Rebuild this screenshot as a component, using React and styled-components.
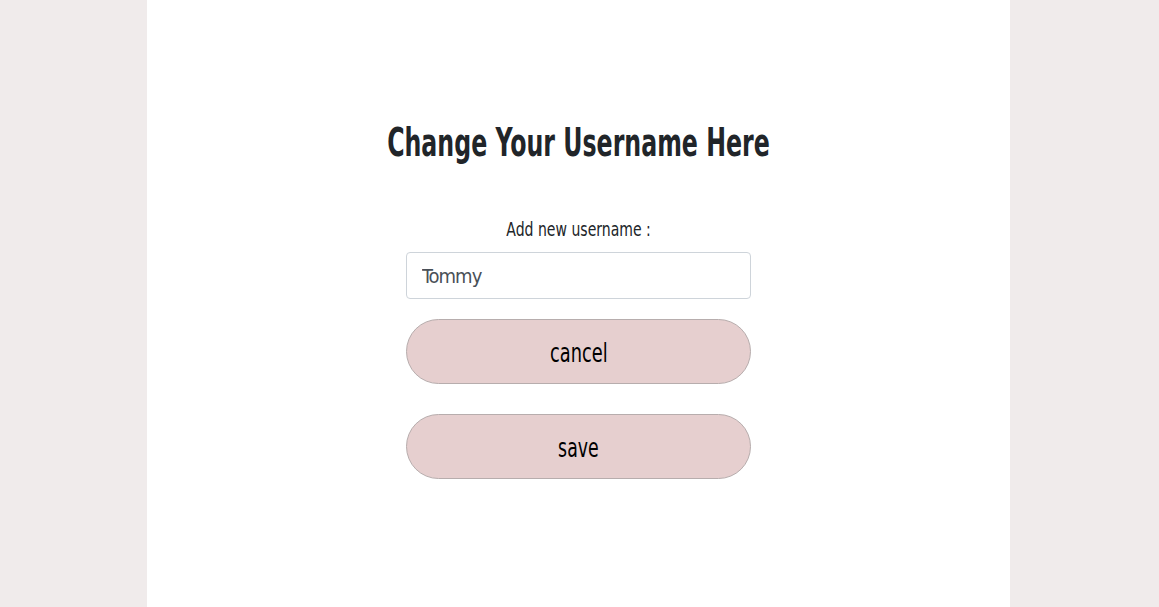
import React, { useState } from 'react';
import styled, { createGlobalStyle } from 'styled-components';

const GlobalStyle = createGlobalStyle`
  html, body {
    margin: 0;
    padding: 0;
    background-color: #f0ebeb;
    font-family: "DejaVu Sans Condensed", "Liberation Sans", sans-serif;
  }
`;

const Page = styled.div`
  min-height: 607px;
  display: flex;
  justify-content: center;
`;

const Panel = styled.main`
  width: 863px;
  margin-left: -2px;
  min-height: 607px;
  background-color: #ffffff;
  display: flex;
  flex-direction: column;
  align-items: center;
  padding-top: 120px;
  box-sizing: border-box;
`;

/* the reference face is a tall condensed one; squeeze the installed face to its width */
const Narrow = styled.span`
  display: inline-block;
  white-space: nowrap;
  transform: scaleX(${(p) => p.$sx});
`;

const Title = styled.h1`
  margin: 0 0 50px;
  font-size: 39px;
  font-weight: 700;
  color: #212529;
  line-height: 1.2;
`;

const Form = styled.form`
  width: 345px;
  display: flex;
  flex-direction: column;
  align-items: center;
`;

const Label = styled.label`
  font-size: 20px;
  line-height: 1.2;
  color: #212529;
  margin-bottom: 11px;
`;

const Input = styled.input`
  width: 100%;
  height: 47px;
  box-sizing: border-box;
  border: 1px solid #ced4da;
  border-radius: 4px;
  padding: 2px 15px 0;
  font-family: inherit;
  font-size: 20px;
  letter-spacing: -1px;
  color: #495057;
  margin-bottom: 20px;
  outline: none;
`;

const PillButton = styled.button`
  width: 100%;
  height: 65px;
  padding: 4px 0 0;
  border: 1px solid #b7adad;
  border-radius: 33px;
  background-color: #e6cfcf;
  color: #000;
  font-family: inherit;
  font-size: 26px;
  cursor: pointer;
  margin-bottom: ${(p) => p.$gap || 0}px;
`;

const App = () => {
  const [name, setName] = useState('Tommy');

  return (
    <Page>
      <GlobalStyle />
      <Panel>
        <Title><Narrow $sx={0.675}>Change Your Username Here</Narrow></Title>
        <Form onSubmit={(e) => e.preventDefault()}>
          <Label htmlFor="username"><Narrow $sx={0.78}>Add new username :</Narrow></Label>
          <Input id="username" value={name} onChange={(e) => setName(e.target.value)} />
          <PillButton type="button" $gap={30}><Narrow $sx={0.76}>cancel</Narrow></PillButton>
          <PillButton type="submit"><Narrow $sx={0.74}>save</Narrow></PillButton>
        </Form>
      </Panel>
    </Page>
  );
};

export default App;
